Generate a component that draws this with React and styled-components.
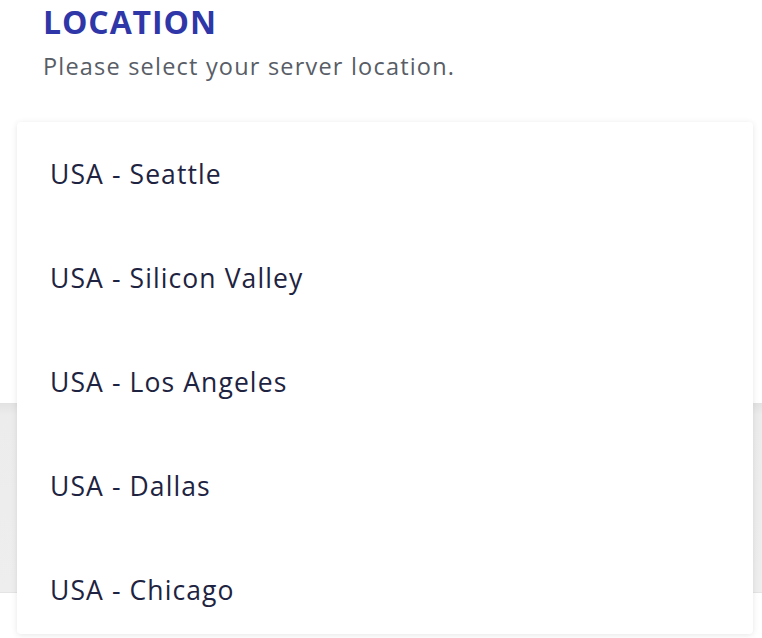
import styled, { createGlobalStyle } from "styled-components";

const GlobalStyle = createGlobalStyle`
  html, body {
    margin: 0;
    padding: 0;
    background: #ffffff;
    font-family: "Open Sans", "Lato", sans-serif;
  }
`;

const Page = styled.div`
  width: 762px;
  height: 638px;
  overflow: hidden;
  position: relative;
  background: #ffffff;
`;

const Header = styled.div`
  padding: 2px 0 0 43px;
`;

const Title = styled.h2`
  margin: 0;
  font-size: 32px;
  font-weight: 700;
  color: #2f37a8;
  line-height: 40px;
  letter-spacing: 0.9px;
`;

const Subtitle = styled.p`
  margin: 9px 0 0;
  font-size: 23.5px;
  color: #585d66;
  line-height: 30px;
  letter-spacing: 1.2px;
`;

const Backdrop = styled.div`
  margin-top: 322px;
  height: 189px;
  background: linear-gradient(#e2e2e2, #ececec 12px, #eeeeee);
  border-bottom: 1px solid #e4e4e4;
`;

const Menu = styled.ul`
  position: absolute;
  top: 122px;
  left: 17px;
  width: 736px;
  height: 512px;
  margin: 0;
  padding: 0;
  list-style: none;
  background: #ffffff;
  border-radius: 4px;
  box-shadow: 0 1px 6px rgba(0, 0, 0, 0.1);
  display: flex;
  flex-direction: column;
`;

const Item = styled.li`
  height: 104px;
  display: flex;
  align-items: center;
  padding-left: 33px;
  font-size: 26.5px;
  color: #1d2340;
  letter-spacing: 1.1px;
  flex-shrink: 0;
`;

const locations = [
  "USA - Seattle",
  "USA - Silicon Valley",
  "USA - Los Angeles",
  "USA - Dallas",
  "USA - Chicago",
];

const App = () => {
  return (
    <Page>
      <GlobalStyle />
      <Header>
        <Title>LOCATION</Title>
        <Subtitle>Please select your server location.</Subtitle>
      </Header>
      <Backdrop />
      <Menu>
        {locations.map((loc) => (
          <Item key={loc}>{loc}</Item>
        ))}
      </Menu>
    </Page>
  );
};

export default App;
